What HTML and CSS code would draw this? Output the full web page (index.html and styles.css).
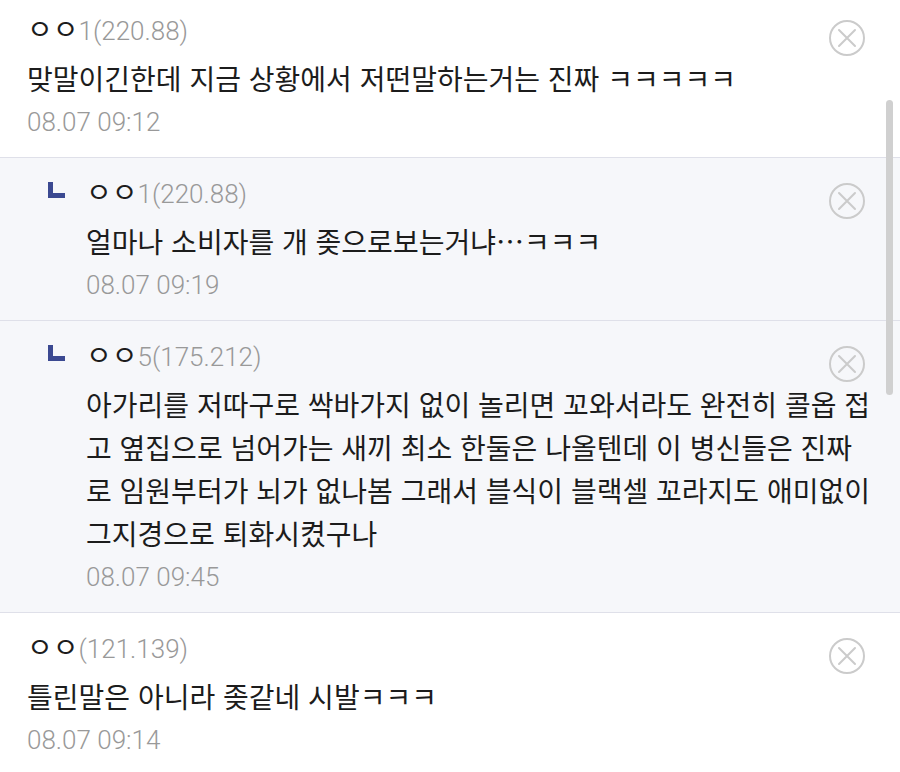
FILE: index.html
```html
<!DOCTYPE html>
<html lang="ko">
<head>
    <meta charset="UTF-8">
    <meta name="viewport" content="width=device-width, initial-scale=1.0">
    <title>댓글</title>
    <link rel="stylesheet" href="styles.css">
</head>
<body>

    <div class="comments">
        <div class="comment first">
            <div class="head">
                <span class="name">ㅇㅇ<span class="ip">1(220.88)</span></span>
                <button class="del" aria-label="삭제">
                    <svg width="36" height="36" viewBox="0 0 36 36"><circle cx="18" cy="18" r="17" fill="none" stroke="#cbcbcb" stroke-width="2"/><path d="M10 10L26 26M26 10L10 26" stroke="#cbcbcb" stroke-width="2" stroke-linecap="round"/></svg>
                </button>
            </div>
            <p class="text">맞말이긴한데 지금 상황에서 저떤말하는거는 진짜 ㅋㅋㅋㅋㅋ</p>
            <div class="date">08.07 09:12</div>
        </div>

        <div class="comment reply">
            <div class="head">
                <span class="mark"></span>
                <span class="name">ㅇㅇ<span class="ip">1(220.88)</span></span>
                <button class="del" aria-label="삭제">
                    <svg width="36" height="36" viewBox="0 0 36 36"><circle cx="18" cy="18" r="17" fill="none" stroke="#cbcbcb" stroke-width="2"/><path d="M10 10L26 26M26 10L10 26" stroke="#cbcbcb" stroke-width="2" stroke-linecap="round"/></svg>
                </button>
            </div>
            <p class="text">얼마나 소비자를 개 좆으로보는거냐…ㅋㅋㅋ</p>
            <div class="date">08.07 09:19</div>
        </div>

        <div class="comment reply">
            <div class="head">
                <span class="mark"></span>
                <span class="name">ㅇㅇ<span class="ip">5(175.212)</span></span>
                <button class="del" aria-label="삭제">
                    <svg width="36" height="36" viewBox="0 0 36 36"><circle cx="18" cy="18" r="17" fill="none" stroke="#cbcbcb" stroke-width="2"/><path d="M10 10L26 26M26 10L10 26" stroke="#cbcbcb" stroke-width="2" stroke-linecap="round"/></svg>
                </button>
            </div>
            <p class="text">아가리를 저따구로 싹바가지 없이 놀리면 꼬와서라도 완전히 콜옵 접고 옆집으로 넘어가는 새끼 최소 한둘은 나올텐데 이 병신들은 진짜로 임원부터가 뇌가 없나봄 그래서 블식이 블랙셀 꼬라지도 애미없이 그지경으로 퇴화시켰구나</p>
            <div class="date">08.07 09:45</div>
        </div>

        <div class="comment">
            <div class="head">
                <span class="name">ㅇㅇ<span class="ip">(121.139)</span></span>
                <button class="del" aria-label="삭제">
                    <svg width="36" height="36" viewBox="0 0 36 36"><circle cx="18" cy="18" r="17" fill="none" stroke="#cbcbcb" stroke-width="2"/><path d="M10 10L26 26M26 10L10 26" stroke="#cbcbcb" stroke-width="2" stroke-linecap="round"/></svg>
                </button>
            </div>
            <p class="text">틀린말은 아니라 좆같네 시발ㅋㅋㅋ</p>
            <div class="date">08.07 09:14</div>
        </div>
    </div>

    <div class="scrollbar"></div>

</body>
</html>
```

FILE: styles.css
```css
body {
    margin: 0;
    background-color: #fff;
    color: #1c1c1c;
    font-family: "Noto Sans CJK KR", sans-serif;
    font-size: 28px;
    overflow: hidden;
}
.comment {
    padding: 12px 27px 13px 27px;
    border-bottom: 1px solid #dfe0e9;
}
.comment.first {
    padding-top: 7px;
}
.reply {
    background-color: #f6f7fa;
    padding-left: 48px;
}
.head {
    display: flex;
    align-items: center;
    height: 44px;
    line-height: 44px;
}
.mark {
    width: 12px;
    height: 11px;
    border-left: 5px solid #3b4991;
    border-bottom: 5px solid #3b4991;
    margin-right: 21px;
    margin-top: -4px;
}
.ip {
    font-family: Roboto, sans-serif;
    font-size: 26px;
    font-weight: 300;
    color: #999;
}
.del {
    margin-left: auto;
    margin-right: 8px;
    align-self: flex-start;
    margin-top: 13px;
    width: 36px;
    height: 36px;
    padding: 0;
    border: none;
    background: none;
    cursor: pointer;
}
.del svg {
    display: block;
}
.text {
    margin: 6px 0 0;
    line-height: 43px;
    word-break: break-all;
}
.reply .text,
.reply .date {
    margin-left: 38px;
}
.date {
    font-family: Roboto, sans-serif;
    font-size: 26px;
    font-weight: 300;
    line-height: 44px;
    color: #999;
}
.scrollbar {
    position: fixed;
    top: 100px;
    right: 7px;
    width: 7px;
    height: 295px;
    background-color: #d0d0d0;
    border-radius: 4px;
}
```
